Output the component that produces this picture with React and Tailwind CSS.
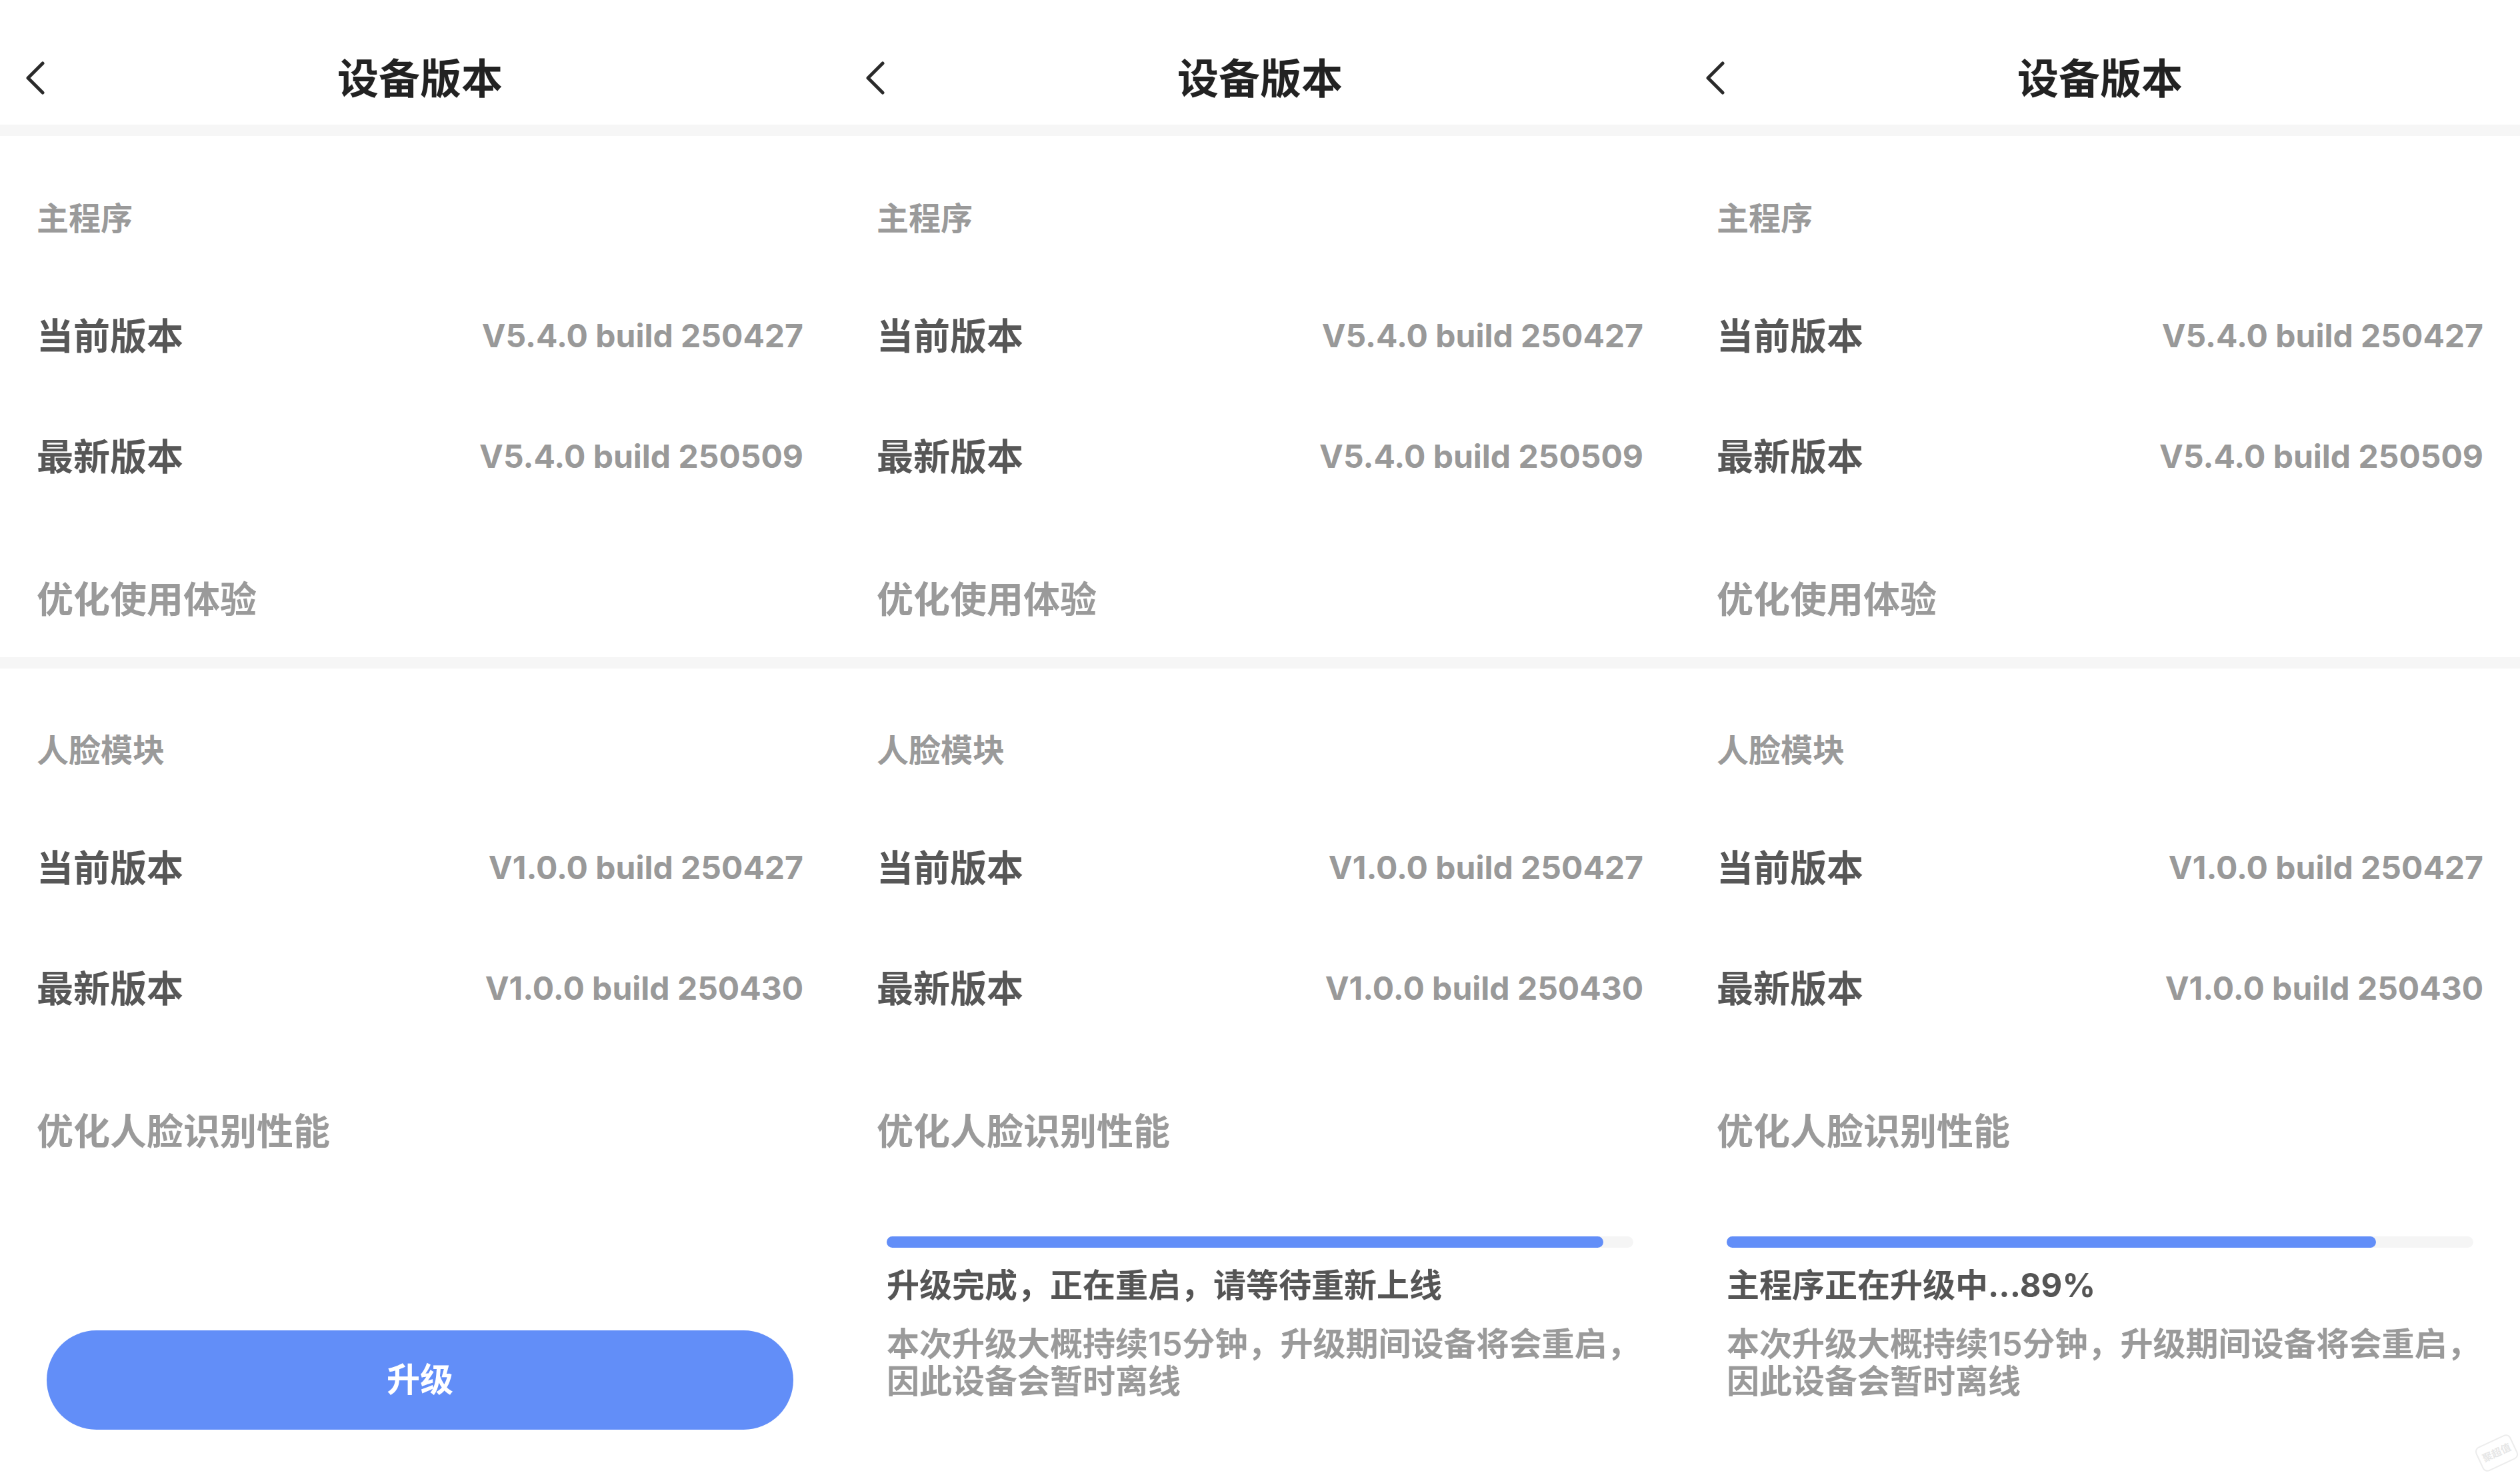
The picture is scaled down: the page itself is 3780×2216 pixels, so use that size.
import React from "react";

function Chevron() {
  return (
    <svg width="30" height="50" viewBox="0 0 30 50" className="block">
      <polyline points="26,3 4,25 26,47" fill="none" stroke="#2a2a2a" strokeWidth="5" strokeLinecap="round" strokeLinejoin="round" />
    </svg>
  );
}

function Row({ label, value, mt }) {
  return (
    <div className={`flex h-[80px] items-center justify-between px-[55px] ${mt}`}>
      <span className="text-[55px] font-bold text-[#575757]">{label}</span>
      <span className="text-[48px] font-bold text-[#999999]">{value}</span>
    </div>
  );
}

function Section({ title, cur, latest, note, first }) {
  return (
    <div className="flex flex-col">
      <div className={`flex h-[80px] items-center px-[55px] ${first ? "mt-[84px]" : "mt-[83px]"}`}>
        <span className="text-[48px] font-bold text-[#9a9a9a]">{title}</span>
      </div>
      <Row label="当前版本" value={cur} mt="mt-[96px]" />
      <Row label="最新版本" value={latest} mt="mt-[101px]" />
      <div className="mt-[134px] flex h-[80px] items-center px-[55px]">
        <span className="text-[55px] font-bold text-[#9a9a9a]">{note}</span>
      </div>
    </div>
  );
}

function Progress({ pct, status }) {
  return (
    <div className="mt-[118px] flex flex-col px-[70px]">
      <div className="h-[17px] w-full rounded-full bg-[#f5f5f5]">
        <div className="h-full rounded-full bg-[#628ef8]" style={{ width: pct + "%" }} />
      </div>
      <div className="mt-[27px] flex h-[60px] items-center">
        <span className="text-[49px] font-bold text-[#555555]">{status}</span>
      </div>
      <p className="mt-[30px] text-[49px] font-semibold leading-[56px] text-[#9a9a9a] whitespace-nowrap">
        本次升级大概持续15分钟，升级期间设备将会重启，
        <br />
        因此设备会暂时离线
      </p>
    </div>
  );
}

function Panel({ variant }) {
  return (
    <div className="flex h-[2216px] w-[1260px] flex-col bg-white">
      <div className="relative flex h-[187px] items-center justify-center pt-[50px]">
        <div className="absolute left-[38px] top-[92px]">
          <Chevron />
        </div>
        <span className="text-[62px] font-bold text-[#222222]">设备版本</span>
      </div>
      <div className="h-[17px] bg-[#f6f6f6]" />
      <Section first title="主程序" cur="V5.4.0 build 250427" latest="V5.4.0 build 250509" note="优化使用体验" />
      <div className="mt-[47px] h-[17px] bg-[#f6f6f6]" />
      <Section title="人脸模块" cur="V1.0.0 build 250427" latest="V1.0.0 build 250430" note="优化人脸识别性能" />
      {variant === "idle" && (
        <div className="mt-[259px] px-[70px]">
          <button className="flex h-[149px] w-full items-center justify-center rounded-full bg-[#628ef8]">
            <span className="text-[50px] font-bold text-white">升级</span>
          </button>
        </div>
      )}
      {variant === "done" && <Progress pct={96} status="升级完成，正在重启，请等待重新上线" />}
      {variant === "progress" && <Progress pct={87} status="主程序正在升级中...89%" />}
    </div>
  );
}

export default function App() {
  return (
    <div className="relative flex h-[2216px] w-[3780px] overflow-hidden bg-white font-[Inter,'Noto_Sans_CJK_SC',sans-serif]">
      <Panel variant="idle" />
      <Panel variant="done" />
      <Panel variant="progress" />
      <div className="absolute left-[3716px] top-[2160px] flex h-[40px] w-[58px] -rotate-[25deg] items-center justify-center rounded-[8px] border-2 border-[#ececec]">
        <span className="text-[15px] font-bold text-[#e6e6e6]">聚超值</span>
      </div>
    </div>
  );
}
